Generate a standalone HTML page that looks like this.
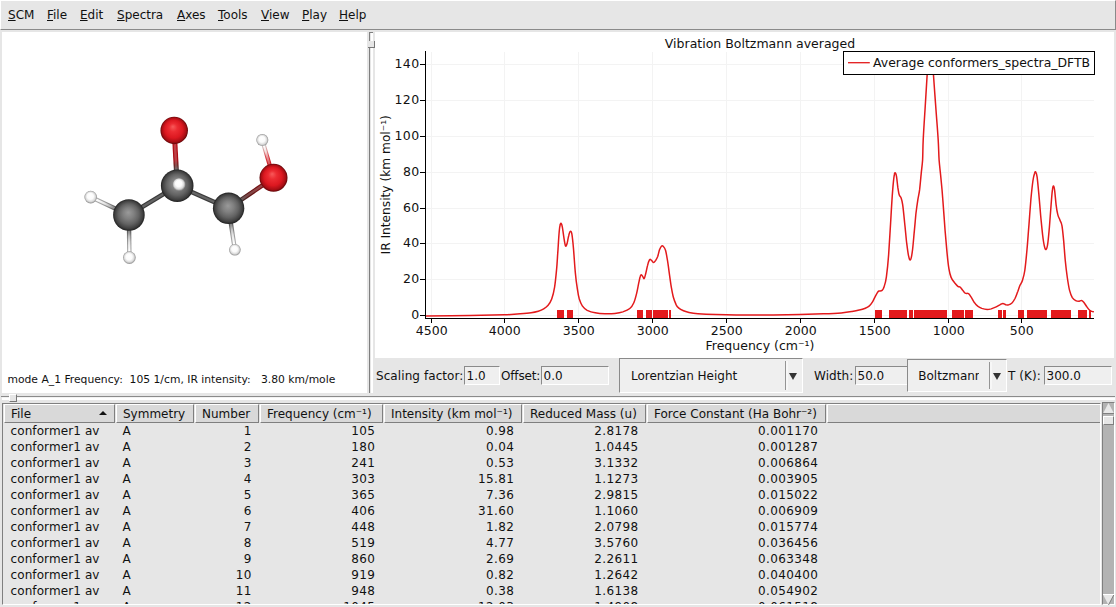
<!DOCTYPE html>
<html><head><meta charset="utf-8"><title>Spectra</title>
<style>
html,body{margin:0;padding:0}
body{width:1116px;height:607px;overflow:hidden;background:#e6e6e6;position:relative;
 font-family:"DejaVu Sans","Liberation Sans",sans-serif;font-size:12px;color:#111;}
div,span,svg{position:absolute;box-sizing:border-box}
.menubar{left:0;top:0;width:1116px;height:30px;background:#e6e6e6;border-top:1px solid #fff;border-left:1px solid #fff;border-bottom:1px solid #8a8a8a;border-right:1px solid #8a8a8a}
.mi{top:7px;line-height:14px;white-space:nowrap}
.mi u{text-decoration:underline;text-underline-offset:1px}
.mol{left:2px;top:32px}
.chart{left:375px;top:32px}
.status{left:7.5px;top:373px;font-size:10.75px;line-height:14px;white-space:pre}
.vsash{left:367px;top:32px;width:8px;height:361px;background:#e6e6e6}
.vsash i{position:absolute;left:2px;top:0;width:1px;height:100%;background:#7f7f7f}
.vsash b{position:absolute;left:4px;top:0;width:2px;height:100%;background:#fff}
.vh{left:368px;top:41px;width:7px;height:7px;background:#e6e6e6;border-right:1px solid #777;border-bottom:1px solid #777}
.hsash1{left:1px;top:396px;width:1114px;height:1px;background:#8a8a8a}
.hsash2{left:2px;top:397px;width:1113px;height:3px;background:#fff;border-top:1px solid #f2f2f2}
.hh{left:9px;top:394px;width:8px;height:8px;background:#e6e6e6;border-right:1px solid #777;border-bottom:1px solid #777;border-top:1px solid #fff;border-left:1px solid #fff}
.lbl{line-height:16px;white-space:nowrap;letter-spacing:0.08px}
.entry{height:19px;background:#efefef;border:1px solid;border-color:#8a8a8a #fff #fff #8a8a8a;line-height:18px;padding-left:1.5px;white-space:nowrap;overflow:hidden}
.combo{background:#efefef;border:1px solid;border-color:#8a8a8a #fff #fff #8a8a8a;white-space:nowrap;overflow:hidden}
.combo span{line-height:16px}
.combo i{position:absolute;top:2px;width:2px;bottom:2px;background:#f7f7f7;border-left:1px solid #949494}
.combo b{position:absolute;width:0;height:0;border-left:4.3px solid transparent;border-right:4.3px solid transparent;border-top:7.5px solid #333}
.table{left:2px;top:403px;width:1099px;height:202px;background:#e6e6e6;border:1px solid;border-color:#7f7f7f #fff #fff #7f7f7f;overflow:hidden}
.hc{top:404px;height:19px;background:#d9d9d9;border:1px solid;border-color:#fff #7f7f7f #7f7f7f #fff;overflow:hidden}
.hc span{top:2px;line-height:15px;white-space:nowrap}
.td{line-height:16px;white-space:nowrap;letter-spacing:0.1px}
.td.r{letter-spacing:0.37px}
.sortarrow{left:99px;top:411px;width:0;height:0;border-left:4px solid transparent;border-right:4px solid transparent;border-bottom:4px solid #111}
.clip{left:0;top:0;width:1100px;height:604px;overflow:hidden}
.sb{left:1102px;top:402px;width:13px;height:203px;background:#b3b3b3;border-left:1px solid #7f7f7f;border-top:1px solid #7f7f7f;border-right:1px solid #fff;border-bottom:1px solid #fff}
.sbthumb{left:1103px;top:416px;width:11px;height:9px;background:#e6e6e6;border:1px solid;border-color:#fff #7f7f7f #7f7f7f #fff}
</style></head><body>
<div class="menubar"><span class="mi" style="left:7px"><u>S</u>CM</span><span class="mi" style="left:46px"><u>F</u>ile</span><span class="mi" style="left:79px"><u>E</u>dit</span><span class="mi" style="left:116px"><u>S</u>pectra</span><span class="mi" style="left:176px"><u>A</u>xes</span><span class="mi" style="left:217px"><u>T</u>ools</span><span class="mi" style="left:260px"><u>V</u>iew</span><span class="mi" style="left:301px"><u>P</u>lay</span><span class="mi" style="left:338px"><u>H</u>elp</span></div>

<svg class="mol" width="365" height="361" viewBox="2 32 365 361">
<defs>
<radialGradient id="gred" cx="0.5" cy="0.5" r="0.5" fx="0.45" fy="0.36">
<stop offset="0" stop-color="#f85a5a"/><stop offset="0.3" stop-color="#ec2c32"/><stop offset="0.65" stop-color="#dc1820"/><stop offset="0.88" stop-color="#a80e14"/><stop offset="1" stop-color="#600608"/>
</radialGradient>
<radialGradient id="ggrey" cx="0.5" cy="0.5" r="0.5" fx="0.48" fy="0.42">
<stop offset="0" stop-color="#9a9a9a"/><stop offset="0.35" stop-color="#808080"/><stop offset="0.65" stop-color="#626262"/><stop offset="0.88" stop-color="#404040"/><stop offset="1" stop-color="#202020"/>
</radialGradient>
<radialGradient id="gwhite" cx="0.5" cy="0.5" r="0.5" fx="0.44" fy="0.36">
<stop offset="0" stop-color="#ffffff"/><stop offset="0.5" stop-color="#fbfbfb"/><stop offset="0.78" stop-color="#dadada"/><stop offset="1" stop-color="#8c8c8c"/>
</radialGradient>
<linearGradient id="b0" gradientUnits="userSpaceOnUse" x1="177.2" y1="185.7" x2="174.2" y2="130.4"><stop offset="0.29" stop-color="#4a4444"/><stop offset="0.37" stop-color="#6a1c1c"/><stop offset="0.47" stop-color="#a80c14"/><stop offset="1.00" stop-color="#b80c14"/></linearGradient><linearGradient id="c0" gradientUnits="userSpaceOnUse" x1="177.2" y1="185.7" x2="174.2" y2="130.4"><stop offset="0.29" stop-color="#716d6d"/><stop offset="0.37" stop-color="#8a4d4d"/><stop offset="0.47" stop-color="#bb4147"/><stop offset="1.00" stop-color="#c74147"/></linearGradient><linearGradient id="b1" gradientUnits="userSpaceOnUse" x1="177.2" y1="185.7" x2="128.9" y2="215.0"><stop offset="0.00" stop-color="#383838"/><stop offset="1.00" stop-color="#383838"/></linearGradient><linearGradient id="c1" gradientUnits="userSpaceOnUse" x1="177.2" y1="185.7" x2="128.9" y2="215.0"><stop offset="0.00" stop-color="#636363"/><stop offset="1.00" stop-color="#636363"/></linearGradient><linearGradient id="b2" gradientUnits="userSpaceOnUse" x1="177.2" y1="185.7" x2="228.6" y2="208.3"><stop offset="0.00" stop-color="#3c3c3c"/><stop offset="1.00" stop-color="#3c3c3c"/></linearGradient><linearGradient id="c2" gradientUnits="userSpaceOnUse" x1="177.2" y1="185.7" x2="228.6" y2="208.3"><stop offset="0.00" stop-color="#666666"/><stop offset="1.00" stop-color="#666666"/></linearGradient><linearGradient id="b3" gradientUnits="userSpaceOnUse" x1="228.6" y1="208.3" x2="273.5" y2="177.8"><stop offset="0.29" stop-color="#402c2c"/><stop offset="0.45" stop-color="#5c1414"/><stop offset="0.74" stop-color="#7c1012"/></linearGradient><linearGradient id="c3" gradientUnits="userSpaceOnUse" x1="228.6" y1="208.3" x2="273.5" y2="177.8"><stop offset="0.29" stop-color="#6a5a5a"/><stop offset="0.45" stop-color="#7f4747"/><stop offset="0.74" stop-color="#984446"/></linearGradient><linearGradient id="b4" gradientUnits="userSpaceOnUse" x1="273.5" y1="177.8" x2="262.3" y2="140.1"><stop offset="0.36" stop-color="#c81820"/><stop offset="0.56" stop-color="#d83c44"/><stop offset="0.70" stop-color="#dc9090"/><stop offset="0.85" stop-color="#ccc0c0"/></linearGradient><linearGradient id="c4" gradientUnits="userSpaceOnUse" x1="273.5" y1="177.8" x2="262.3" y2="140.1"><stop offset="0.36" stop-color="#d55157"/><stop offset="0.56" stop-color="#eb9da1"/><stop offset="0.70" stop-color="#f6e3e3"/><stop offset="0.85" stop-color="#ffffff"/></linearGradient><linearGradient id="b5" gradientUnits="userSpaceOnUse" x1="128.9" y1="215.0" x2="90.7" y2="197.1"><stop offset="0.37" stop-color="#585858"/><stop offset="0.50" stop-color="#808080"/><stop offset="0.64" stop-color="#9c9c9c"/><stop offset="0.85" stop-color="#acacac"/></linearGradient><linearGradient id="c5" gradientUnits="userSpaceOnUse" x1="128.9" y1="215.0" x2="90.7" y2="197.1"><stop offset="0.37" stop-color="#818181"/><stop offset="0.50" stop-color="#bfbfbf"/><stop offset="0.64" stop-color="#e6e6e6"/><stop offset="0.85" stop-color="#ffffff"/></linearGradient><linearGradient id="b6" gradientUnits="userSpaceOnUse" x1="128.9" y1="215.0" x2="129.4" y2="257.6"><stop offset="0.37" stop-color="#585858"/><stop offset="0.50" stop-color="#808080"/><stop offset="0.64" stop-color="#9c9c9c"/><stop offset="0.85" stop-color="#acacac"/></linearGradient><linearGradient id="c6" gradientUnits="userSpaceOnUse" x1="128.9" y1="215.0" x2="129.4" y2="257.6"><stop offset="0.37" stop-color="#818181"/><stop offset="0.50" stop-color="#bfbfbf"/><stop offset="0.64" stop-color="#e6e6e6"/><stop offset="0.85" stop-color="#ffffff"/></linearGradient><linearGradient id="b7" gradientUnits="userSpaceOnUse" x1="228.6" y1="208.3" x2="234.9" y2="249.8"><stop offset="0.37" stop-color="#585858"/><stop offset="0.50" stop-color="#808080"/><stop offset="0.64" stop-color="#9c9c9c"/><stop offset="0.85" stop-color="#acacac"/></linearGradient><linearGradient id="c7" gradientUnits="userSpaceOnUse" x1="228.6" y1="208.3" x2="234.9" y2="249.8"><stop offset="0.37" stop-color="#818181"/><stop offset="0.50" stop-color="#bfbfbf"/><stop offset="0.64" stop-color="#e6e6e6"/><stop offset="0.85" stop-color="#ffffff"/></linearGradient>
</defs>
<rect x="2" y="32" width="365" height="361" fill="#fff"/>
<line x1="177.2" y1="185.7" x2="174.2" y2="130.4" stroke="url(#b0)" stroke-width="5.0"/><line x1="177.2" y1="185.7" x2="174.2" y2="130.4" stroke="url(#c0)" stroke-width="2.5"/><line x1="177.2" y1="185.7" x2="128.9" y2="215.0" stroke="url(#b1)" stroke-width="4.6"/><line x1="177.2" y1="185.7" x2="128.9" y2="215.0" stroke="url(#c1)" stroke-width="2.3"/><line x1="177.2" y1="185.7" x2="228.6" y2="208.3" stroke="url(#b2)" stroke-width="4.6"/><line x1="177.2" y1="185.7" x2="228.6" y2="208.3" stroke="url(#c2)" stroke-width="2.3"/><line x1="228.6" y1="208.3" x2="273.5" y2="177.8" stroke="url(#b3)" stroke-width="4.6"/><line x1="228.6" y1="208.3" x2="273.5" y2="177.8" stroke="url(#c3)" stroke-width="2.3"/><line x1="273.5" y1="177.8" x2="262.3" y2="140.1" stroke="url(#b4)" stroke-width="4.2"/><line x1="273.5" y1="177.8" x2="262.3" y2="140.1" stroke="url(#c4)" stroke-width="2.1"/><line x1="128.9" y1="215.0" x2="90.7" y2="197.1" stroke="url(#b5)" stroke-width="4.4"/><line x1="128.9" y1="215.0" x2="90.7" y2="197.1" stroke="url(#c5)" stroke-width="2.2"/><line x1="128.9" y1="215.0" x2="129.4" y2="257.6" stroke="url(#b6)" stroke-width="4.4"/><line x1="128.9" y1="215.0" x2="129.4" y2="257.6" stroke="url(#c6)" stroke-width="2.2"/><line x1="228.6" y1="208.3" x2="234.9" y2="249.8" stroke="url(#b7)" stroke-width="4.4"/><line x1="228.6" y1="208.3" x2="234.9" y2="249.8" stroke="url(#c7)" stroke-width="2.2"/>
<circle cx="174.2" cy="130.4" r="13.75" fill="url(#gred)"/><circle cx="128.9" cy="215.0" r="15.80" fill="url(#ggrey)"/><circle cx="228.6" cy="208.3" r="15.70" fill="url(#ggrey)"/><circle cx="177.2" cy="185.7" r="16.30" fill="url(#ggrey)"/><circle cx="179.0" cy="184.4" r="6.40" fill="url(#gwhite)"/><circle cx="273.5" cy="177.8" r="14.00" fill="url(#gred)"/><circle cx="262.3" cy="140.1" r="6.00" fill="url(#gwhite)"/><circle cx="90.7" cy="197.1" r="6.30" fill="url(#gwhite)"/><circle cx="129.4" cy="257.6" r="6.30" fill="url(#gwhite)"/><circle cx="234.9" cy="249.8" r="5.80" fill="url(#gwhite)"/>
</svg>

<div class="status">mode A_1 Frequency:  105 1/cm, IR intensity:   3.80 km/mole</div>
<div class="vsash"><i></i><b></b><u style="position:absolute;left:2px;top:0;width:4px;height:1px;background:#7f7f7f"></u></div><div class="vh"></div>

<svg class="chart" width="739" height="326" viewBox="375 32 739 326">
<rect x="375" y="32" width="739" height="326" fill="#fff"/>
<g stroke="#f3f3f3" stroke-width="1" shape-rendering="crispEdges"><line x1="1021.5" y1="52" x2="1021.5" y2="318"/><line x1="948.5" y1="52" x2="948.5" y2="318"/><line x1="874.5" y1="52" x2="874.5" y2="318"/><line x1="800.5" y1="52" x2="800.5" y2="318"/><line x1="726.5" y1="52" x2="726.5" y2="318"/><line x1="652.5" y1="52" x2="652.5" y2="318"/><line x1="578.5" y1="52" x2="578.5" y2="318"/><line x1="504.5" y1="52" x2="504.5" y2="318"/><line x1="431.5" y1="52" x2="431.5" y2="318"/><line x1="426" y1="315.5" x2="1094" y2="315.5"/><line x1="426" y1="279.5" x2="1094" y2="279.5"/><line x1="426" y1="243.5" x2="1094" y2="243.5"/><line x1="426" y1="208.5" x2="1094" y2="208.5"/><line x1="426" y1="172.5" x2="1094" y2="172.5"/><line x1="426" y1="136.5" x2="1094" y2="136.5"/><line x1="426" y1="100.5" x2="1094" y2="100.5"/><line x1="426" y1="64.5" x2="1094" y2="64.5"/></g>
<clipPath id="pc"><rect x="426" y="52" width="668" height="267"/></clipPath>
<path d="M426.0 316.1C433.3 316.0 457.0 315.8 470.0 315.6C483.0 315.4 495.8 315.1 504.2 314.8C512.6 314.5 515.9 314.2 520.4 313.8C524.9 313.4 528.1 313.1 531.1 312.7C534.1 312.3 536.2 311.8 538.3 311.2C540.4 310.6 542.1 309.9 543.7 308.9C545.3 307.9 546.8 306.9 548.1 305.3C549.4 303.7 550.6 302.0 551.7 299.0C552.8 296.0 553.8 292.1 554.6 287.1C555.4 282.2 556.0 275.6 556.6 269.3C557.2 263.1 557.5 255.8 558.0 249.6C558.4 243.3 558.8 235.9 559.2 231.8C559.5 227.6 559.8 226.2 560.2 224.8C560.5 223.4 560.8 223.1 561.1 223.4C561.5 223.8 561.9 224.4 562.3 226.8C562.8 229.2 563.4 234.5 563.9 237.7C564.4 240.9 565.0 245.0 565.5 246.0C566.0 247.0 566.5 245.3 567.1 243.6C567.6 241.9 568.1 237.8 568.7 235.7C569.2 233.7 569.7 231.7 570.2 231.4C570.8 231.0 571.3 231.0 571.8 233.7C572.3 236.4 572.8 241.0 573.4 247.6C574.0 254.2 574.7 266.4 575.4 273.3C576.0 280.2 576.7 284.8 577.4 289.1C578.0 293.4 578.5 296.2 579.3 299.0C580.2 301.8 581.0 304.0 582.3 305.9C583.6 307.8 585.1 309.1 587.2 310.3C589.4 311.4 592.2 312.3 595.2 312.8C598.1 313.4 601.8 313.7 605.0 313.8C608.3 313.9 612.0 313.8 614.9 313.4C617.9 313.1 620.4 312.7 622.8 311.9C625.3 311.0 628.0 310.0 629.8 308.5C631.6 307.0 632.6 305.5 633.7 303.0C634.9 300.4 635.9 296.4 636.7 293.1C637.5 289.8 638.1 286.0 638.7 283.2C639.3 280.4 639.8 277.7 640.3 276.3C640.7 274.8 641.0 274.6 641.4 274.7C641.9 274.8 642.6 276.2 643.0 276.9C643.5 277.5 643.7 279.2 644.2 278.6C644.7 278.0 645.2 275.5 645.8 273.3C646.4 271.1 647.0 267.5 647.6 265.4C648.1 263.2 648.7 261.4 649.2 260.4C649.6 259.4 650.0 259.3 650.5 259.4C651.0 259.5 651.6 260.5 652.1 261.0C652.6 261.6 653.1 262.7 653.7 262.6C654.3 262.5 655.0 261.5 655.7 260.4C656.3 259.4 657.0 258.3 657.7 256.5C658.3 254.7 659.0 251.3 659.6 249.6C660.3 247.8 661.0 246.5 661.6 246.0C662.3 245.5 662.9 246.0 663.6 246.8C664.3 247.5 664.9 248.4 665.6 250.5C666.2 252.7 666.7 255.7 667.3 259.4C668.0 263.2 668.7 268.7 669.3 273.3C670.0 277.9 670.6 283.2 671.3 287.1C672.0 291.1 672.5 294.1 673.3 297.0C674.1 300.0 675.4 303.1 676.2 304.9C677.1 306.7 677.3 306.8 678.5 307.8C679.7 308.8 681.8 310.0 683.5 310.8C685.2 311.6 686.6 311.9 689.0 312.4C691.4 312.9 693.4 313.3 697.9 313.7C702.4 314.1 706.8 314.4 715.8 314.6C724.8 314.8 739.8 315.1 751.7 315.1C763.7 315.1 775.5 314.9 787.5 314.7C799.5 314.5 814.4 314.1 823.4 313.8C832.4 313.5 836.5 313.3 841.3 312.9C846.1 312.5 849.0 312.0 852.0 311.5C855.0 311.0 857.1 310.6 859.2 310.1C861.3 309.6 863.0 309.2 864.6 308.5C866.2 307.8 867.8 307.2 869.1 306.1C870.5 305.0 871.7 303.2 872.7 301.6C873.7 300.0 874.4 297.9 875.3 296.3C876.2 294.7 877.3 292.7 878.0 291.8C878.7 290.9 878.7 291.2 879.3 291.0C880.0 290.8 881.2 291.2 882.1 290.4C882.9 289.7 883.5 288.6 884.2 286.4C885.0 284.1 885.7 282.1 886.4 276.8C887.1 271.6 887.9 264.6 888.6 255.1C889.3 245.6 890.1 230.7 890.8 219.8C891.4 208.9 892.1 197.4 892.7 189.9C893.3 182.4 893.8 177.8 894.3 174.9C894.7 172.1 895.0 172.8 895.4 173.0C895.7 173.3 896.1 173.9 896.5 176.3C896.9 178.7 897.4 184.1 897.8 187.2C898.3 190.3 898.6 193.0 899.2 194.8C899.7 196.6 900.5 196.4 901.1 198.0C901.7 199.7 902.1 200.8 902.7 204.8C903.3 208.9 904.0 216.4 904.6 222.5C905.3 228.6 905.9 236.1 906.5 241.5C907.2 247.0 907.8 252.0 908.4 255.1C909.1 258.2 909.7 260.5 910.3 260.0C911.0 259.5 911.6 256.8 912.2 252.4C912.9 248.0 913.5 239.9 914.1 233.4C914.8 226.8 915.4 218.7 916.0 213.0C916.7 207.3 917.3 203.3 917.9 199.4C918.5 195.6 919.0 194.2 919.6 189.9C920.1 185.6 920.7 178.6 921.2 173.6C921.7 168.6 922.2 165.6 922.6 160.0C922.9 154.4 922.8 148.3 923.2 140.0C923.6 131.7 924.3 121.0 925.0 110.0C925.7 99.0 926.6 83.2 927.2 74.0C927.8 64.8 927.9 60.0 928.4 55.0C928.9 50.0 929.7 44.0 930.3 44.0C930.9 44.0 931.7 50.0 932.2 55.0C932.7 60.0 932.8 64.8 933.4 74.0C934.0 83.2 935.2 99.0 936.0 110.0C936.8 121.0 937.7 131.7 938.2 140.0C938.7 148.3 938.7 153.5 939.1 160.0C939.6 166.5 940.4 172.2 941.0 179.0C941.7 185.8 942.3 192.2 942.9 200.8C943.6 209.4 944.4 222.0 945.1 230.7C945.8 239.3 946.4 246.1 947.0 252.4C947.6 258.7 948.2 264.5 948.9 268.7C949.6 272.9 950.1 275.0 951.1 277.4C952.0 279.7 953.5 281.3 954.6 282.8C955.8 284.3 956.9 285.6 957.9 286.4C958.8 287.1 959.5 286.5 960.3 287.2C961.1 287.9 962.0 289.4 962.8 290.4C963.6 291.4 964.3 292.6 965.2 293.2C966.2 293.7 967.5 293.0 968.5 293.7C969.5 294.4 970.2 295.7 971.2 297.2C972.2 298.7 973.4 301.2 974.5 302.7C975.5 304.2 976.5 305.2 977.7 306.2C978.9 307.1 980.2 307.8 981.8 308.4C983.4 308.9 985.7 309.4 987.2 309.5C988.8 309.5 989.7 309.3 991.2 308.9C992.7 308.4 994.7 307.6 996.2 306.9C997.7 306.2 999.0 305.2 1000.1 304.7C1001.3 304.1 1002.0 303.5 1002.9 303.5C1003.9 303.5 1004.8 304.4 1005.7 304.7C1006.7 304.9 1007.5 305.3 1008.5 304.9C1009.6 304.6 1011.1 303.8 1012.2 302.7C1013.2 301.6 1014.0 300.4 1015.0 298.5C1015.9 296.6 1016.9 293.7 1017.8 291.5C1018.6 289.3 1019.2 287.2 1020.0 285.3C1020.8 283.5 1021.7 282.8 1022.5 280.3C1023.3 277.8 1024.0 275.7 1024.8 270.5C1025.5 265.4 1026.3 257.2 1027.0 249.5C1027.7 241.8 1028.3 232.7 1029.0 224.4C1029.6 216.0 1030.3 206.4 1030.9 199.2C1031.6 191.9 1032.3 185.3 1032.9 181.0C1033.5 176.6 1034.1 174.6 1034.6 173.2C1035.0 171.7 1035.3 171.4 1035.7 172.0C1036.1 172.6 1036.6 173.2 1037.1 176.8C1037.6 180.4 1038.2 187.0 1038.8 193.6C1039.4 200.1 1040.1 209.0 1040.7 216.0C1041.4 223.0 1042.1 230.5 1042.7 235.5C1043.3 240.6 1043.8 243.8 1044.4 246.2C1044.9 248.5 1045.5 249.9 1046.0 249.5C1046.6 249.2 1047.2 247.7 1047.7 243.9C1048.3 240.2 1048.8 233.7 1049.4 227.2C1049.9 220.6 1050.6 211.1 1051.1 204.8C1051.6 198.5 1052.0 192.5 1052.5 189.4C1052.9 186.3 1053.2 185.8 1053.6 186.0C1054.0 186.3 1054.3 187.7 1054.7 190.8C1055.1 193.9 1055.6 200.8 1056.1 204.8C1056.6 208.7 1057.1 212.0 1057.8 214.6C1058.4 217.1 1059.3 218.3 1060.0 220.2C1060.7 222.0 1061.4 222.3 1062.0 225.8C1062.6 229.3 1063.1 235.3 1063.7 241.1C1064.2 247.0 1064.7 254.7 1065.3 260.7C1065.9 266.8 1066.6 272.6 1067.3 277.5C1068.0 282.4 1068.7 286.7 1069.5 290.1C1070.4 293.5 1071.3 295.9 1072.3 297.7C1073.4 299.4 1074.6 300.1 1075.7 300.7C1076.8 301.3 1077.8 301.3 1078.8 301.3C1079.7 301.3 1080.7 300.2 1081.6 300.5C1082.5 300.7 1083.2 301.6 1084.1 302.7C1085.0 303.8 1086.0 305.6 1086.9 306.9C1087.8 308.2 1088.8 309.5 1089.7 310.3C1090.5 311.0 1091.2 311.1 1091.9 311.4C1092.6 311.7 1093.6 311.8 1093.9 311.9" fill="none" stroke="#e31a1c" stroke-width="1.5" stroke-linejoin="round" clip-path="url(#pc)"/>
<g fill="#e31a1c" shape-rendering="crispEdges"><rect x="556.8" y="310" width="6.7" height="8"/><rect x="566.9" y="310" width="5.7" height="8"/><rect x="637.1" y="310" width="5.5" height="8"/><rect x="646.0" y="310" width="5.5" height="8"/><rect x="653.1" y="310" width="14.8" height="8"/><rect x="669.3" y="310" width="1.4" height="8"/><rect x="875.0" y="310" width="6.8" height="8"/><rect x="889.4" y="310" width="17.6" height="8"/><rect x="909.2" y="310" width="3.8" height="8"/><rect x="914.4" y="310" width="32.9" height="8"/><rect x="951.6" y="310" width="12.5" height="8"/><rect x="965.2" y="310" width="7.6" height="8"/><rect x="998.3" y="310" width="3.5" height="8"/><rect x="1002.9" y="310" width="2.9" height="8"/><rect x="1018.3" y="310" width="5.9" height="8"/><rect x="1026.7" y="310" width="20.5" height="8"/><rect x="1050.5" y="310" width="20.7" height="8"/><rect x="1077.9" y="310" width="8.6" height="8"/><rect x="1088.5" y="310" width="2.3" height="8"/></g>
<g stroke="#000" stroke-width="1" shape-rendering="crispEdges">
<line x1="425.5" y1="51" x2="425.5" y2="319"/>
<line x1="425" y1="318.5" x2="1094" y2="318.5"/>
<line x1="1021.5" y1="319" x2="1021.5" y2="323"/><line x1="948.5" y1="319" x2="948.5" y2="323"/><line x1="874.5" y1="319" x2="874.5" y2="323"/><line x1="800.5" y1="319" x2="800.5" y2="323"/><line x1="726.5" y1="319" x2="726.5" y2="323"/><line x1="652.5" y1="319" x2="652.5" y2="323"/><line x1="578.5" y1="319" x2="578.5" y2="323"/><line x1="504.5" y1="319" x2="504.5" y2="323"/><line x1="431.5" y1="319" x2="431.5" y2="323"/><line x1="420" y1="315.5" x2="425" y2="315.5"/><line x1="420" y1="279.5" x2="425" y2="279.5"/><line x1="420" y1="243.5" x2="425" y2="243.5"/><line x1="420" y1="208.5" x2="425" y2="208.5"/><line x1="420" y1="172.5" x2="425" y2="172.5"/><line x1="420" y1="136.5" x2="425" y2="136.5"/><line x1="420" y1="100.5" x2="425" y2="100.5"/><line x1="420" y1="64.5" x2="425" y2="64.5"/>
</g>
<g font-family="DejaVu Sans, Liberation Sans, sans-serif" font-size="12.5px" fill="#111">
<g letter-spacing="0.1"><text x="1021.8" y="335" text-anchor="middle">500</text><text x="948.8" y="335" text-anchor="middle">1000</text><text x="874.8" y="335" text-anchor="middle">1500</text><text x="800.8" y="335" text-anchor="middle">2000</text><text x="726.8" y="335" text-anchor="middle">2500</text><text x="652.8" y="335" text-anchor="middle">3000</text><text x="578.8" y="335" text-anchor="middle">3500</text><text x="504.8" y="335" text-anchor="middle">4000</text><text x="431.8" y="335" text-anchor="middle">4500</text></g><g letter-spacing="0.45"><text x="419.7" y="318.7" text-anchor="end">0</text><text x="419.7" y="282.7" text-anchor="end">20</text><text x="419.7" y="246.7" text-anchor="end">40</text><text x="419.7" y="211.7" text-anchor="end">60</text><text x="419.7" y="175.7" text-anchor="end">80</text><text x="419.7" y="139.7" text-anchor="end">100</text><text x="419.7" y="103.7" text-anchor="end">120</text><text x="419.7" y="67.7" text-anchor="end">140</text></g>
<text x="760" y="48" text-anchor="middle">Vibration Boltzmann averaged</text>
<text x="760" y="350" text-anchor="middle">Frequency (cm⁻¹)</text>
<text transform="translate(389.5 184.8) rotate(-90)" text-anchor="middle" font-size="12.2px">IR Intensity (km mol⁻¹)</text>
</g>
<rect x="843.5" y="51.5" width="251" height="23" fill="#fff" stroke="#000" stroke-width="1"/>
<line x1="848" y1="62.7" x2="869.8" y2="62.7" stroke="#e31a1c" stroke-width="1.3"/>
<text x="873" y="67" font-family="DejaVu Sans, Liberation Sans, sans-serif" font-size="12.45px" fill="#111">Average conformers_spectra_DFTB</text>
</svg>

<span class="lbl" style="left:376px;top:368px">Scaling factor:</span>
<div class="entry" style="left:464px;top:366px;width:36px">1.0</div>
<span class="lbl" style="left:501px;top:368px;letter-spacing:-0.15px">Offset:</span>
<div class="entry" style="left:541px;top:366px;width:68px">0.0</div>
<div class="combo" style="left:619px;width:184px;top:358px;height:35px"><span style="left:11px;top:9px">Lorentzian Height</span><i style="left:165px"></i><b style="left:169.3px;top:14px"></b></div>
<span class="lbl" style="left:814px;top:368px">Width:</span>
<div class="entry" style="left:855px;top:366px;width:53px">50.0</div>
<div class="combo" style="left:907px;width:100px;top:359px;height:33px"><span style="left:10.3px;top:8px;width:60.6px;overflow:hidden">Boltzmann</span><i style="left:81px"></i><b style="left:85.3px;top:13px"></b></div>
<span class="lbl" style="left:1008px;top:368px">T (K):</span>
<div class="entry" style="left:1044px;top:366px;width:68px">300.0</div>
<div class="hsash1"></div><div class="hsash2"></div><div class="hh"></div>
<div class="table"></div>
<div class="clip"><div class="hc" style="left:4px;width:111px"><span style="left:6px">File</span></div><div class="hc" style="left:116px;width:78px"><span style="left:6px">Symmetry</span></div><div class="hc" style="left:195px;width:64px"><span style="left:6px">Number</span></div><div class="hc" style="left:260px;width:123px"><span style="left:6px">Frequency (cm⁻¹)</span></div><div class="hc" style="left:384px;width:138px"><span style="left:6px">Intensity (km mol⁻¹)</span></div><div class="hc" style="left:523px;width:123px"><span style="left:6px">Reduced Mass (u)</span></div><div class="hc" style="left:647px;width:179px"><span style="left:6px">Force Constant (Ha Bohr⁻²)</span></div><div class="hc" style="left:827px;width:279px"><span style="left:3px"></span></div><div class="sortarrow"></div><span class="td" style="left:10.5px;top:423px">conformer1 av</span><span class="td" style="left:122.5px;top:423px">A</span><span class="td r" style="right:848.3px;top:423px">1</span><span class="td r" style="right:724.8px;top:423px">105</span><span class="td r" style="right:585.7px;top:423px">0.98</span><span class="td r" style="right:461.5px;top:423px">2.8178</span><span class="td r" style="right:281.70000000000005px;top:423px">0.001170</span><span class="td" style="left:10.5px;top:439px">conformer1 av</span><span class="td" style="left:122.5px;top:439px">A</span><span class="td r" style="right:848.3px;top:439px">2</span><span class="td r" style="right:724.8px;top:439px">180</span><span class="td r" style="right:585.7px;top:439px">0.04</span><span class="td r" style="right:461.5px;top:439px">1.0445</span><span class="td r" style="right:281.70000000000005px;top:439px">0.001287</span><span class="td" style="left:10.5px;top:455px">conformer1 av</span><span class="td" style="left:122.5px;top:455px">A</span><span class="td r" style="right:848.3px;top:455px">3</span><span class="td r" style="right:724.8px;top:455px">241</span><span class="td r" style="right:585.7px;top:455px">0.53</span><span class="td r" style="right:461.5px;top:455px">3.1332</span><span class="td r" style="right:281.70000000000005px;top:455px">0.006864</span><span class="td" style="left:10.5px;top:471px">conformer1 av</span><span class="td" style="left:122.5px;top:471px">A</span><span class="td r" style="right:848.3px;top:471px">4</span><span class="td r" style="right:724.8px;top:471px">303</span><span class="td r" style="right:585.7px;top:471px">15.81</span><span class="td r" style="right:461.5px;top:471px">1.1273</span><span class="td r" style="right:281.70000000000005px;top:471px">0.003905</span><span class="td" style="left:10.5px;top:487px">conformer1 av</span><span class="td" style="left:122.5px;top:487px">A</span><span class="td r" style="right:848.3px;top:487px">5</span><span class="td r" style="right:724.8px;top:487px">365</span><span class="td r" style="right:585.7px;top:487px">7.36</span><span class="td r" style="right:461.5px;top:487px">2.9815</span><span class="td r" style="right:281.70000000000005px;top:487px">0.015022</span><span class="td" style="left:10.5px;top:503px">conformer1 av</span><span class="td" style="left:122.5px;top:503px">A</span><span class="td r" style="right:848.3px;top:503px">6</span><span class="td r" style="right:724.8px;top:503px">406</span><span class="td r" style="right:585.7px;top:503px">31.60</span><span class="td r" style="right:461.5px;top:503px">1.1060</span><span class="td r" style="right:281.70000000000005px;top:503px">0.006909</span><span class="td" style="left:10.5px;top:519px">conformer1 av</span><span class="td" style="left:122.5px;top:519px">A</span><span class="td r" style="right:848.3px;top:519px">7</span><span class="td r" style="right:724.8px;top:519px">448</span><span class="td r" style="right:585.7px;top:519px">1.82</span><span class="td r" style="right:461.5px;top:519px">2.0798</span><span class="td r" style="right:281.70000000000005px;top:519px">0.015774</span><span class="td" style="left:10.5px;top:535px">conformer1 av</span><span class="td" style="left:122.5px;top:535px">A</span><span class="td r" style="right:848.3px;top:535px">8</span><span class="td r" style="right:724.8px;top:535px">519</span><span class="td r" style="right:585.7px;top:535px">4.77</span><span class="td r" style="right:461.5px;top:535px">3.5760</span><span class="td r" style="right:281.70000000000005px;top:535px">0.036456</span><span class="td" style="left:10.5px;top:551px">conformer1 av</span><span class="td" style="left:122.5px;top:551px">A</span><span class="td r" style="right:848.3px;top:551px">9</span><span class="td r" style="right:724.8px;top:551px">860</span><span class="td r" style="right:585.7px;top:551px">2.69</span><span class="td r" style="right:461.5px;top:551px">2.2611</span><span class="td r" style="right:281.70000000000005px;top:551px">0.063348</span><span class="td" style="left:10.5px;top:567px">conformer1 av</span><span class="td" style="left:122.5px;top:567px">A</span><span class="td r" style="right:848.3px;top:567px">10</span><span class="td r" style="right:724.8px;top:567px">919</span><span class="td r" style="right:585.7px;top:567px">0.82</span><span class="td r" style="right:461.5px;top:567px">1.2642</span><span class="td r" style="right:281.70000000000005px;top:567px">0.040400</span><span class="td" style="left:10.5px;top:583px">conformer1 av</span><span class="td" style="left:122.5px;top:583px">A</span><span class="td r" style="right:848.3px;top:583px">11</span><span class="td r" style="right:724.8px;top:583px">948</span><span class="td r" style="right:585.7px;top:583px">0.38</span><span class="td r" style="right:461.5px;top:583px">1.6138</span><span class="td r" style="right:281.70000000000005px;top:583px">0.054902</span><span class="td" style="left:10.5px;top:599px">conformer1 av</span><span class="td" style="left:122.5px;top:599px">A</span><span class="td r" style="right:848.3px;top:599px">12</span><span class="td r" style="right:724.8px;top:599px">1045</span><span class="td r" style="right:585.7px;top:599px">12.03</span><span class="td r" style="right:461.5px;top:599px">1.4908</span><span class="td r" style="right:281.70000000000005px;top:599px">0.061518</span></div>
<div class="sb"></div><div class="sbthumb"></div>
<svg style="left:1103px;top:403px" width="11" height="11" viewBox="0 0 11 11"><path d="M5.5 0L11 10.5H0Z" fill="#e8e8e8"/><path d="M0 10.5H11" stroke="#7f7f7f"/></svg>
<svg style="left:1103px;top:594px" width="11" height="11" viewBox="0 0 11 11"><path d="M0 0.5H11L5.5 11Z" fill="#e8e8e8"/><path d="M11 0.5L5.5 11" stroke="#7f7f7f"/><path d="M0 0.5H11" stroke="#fff"/></svg>
</body></html>
